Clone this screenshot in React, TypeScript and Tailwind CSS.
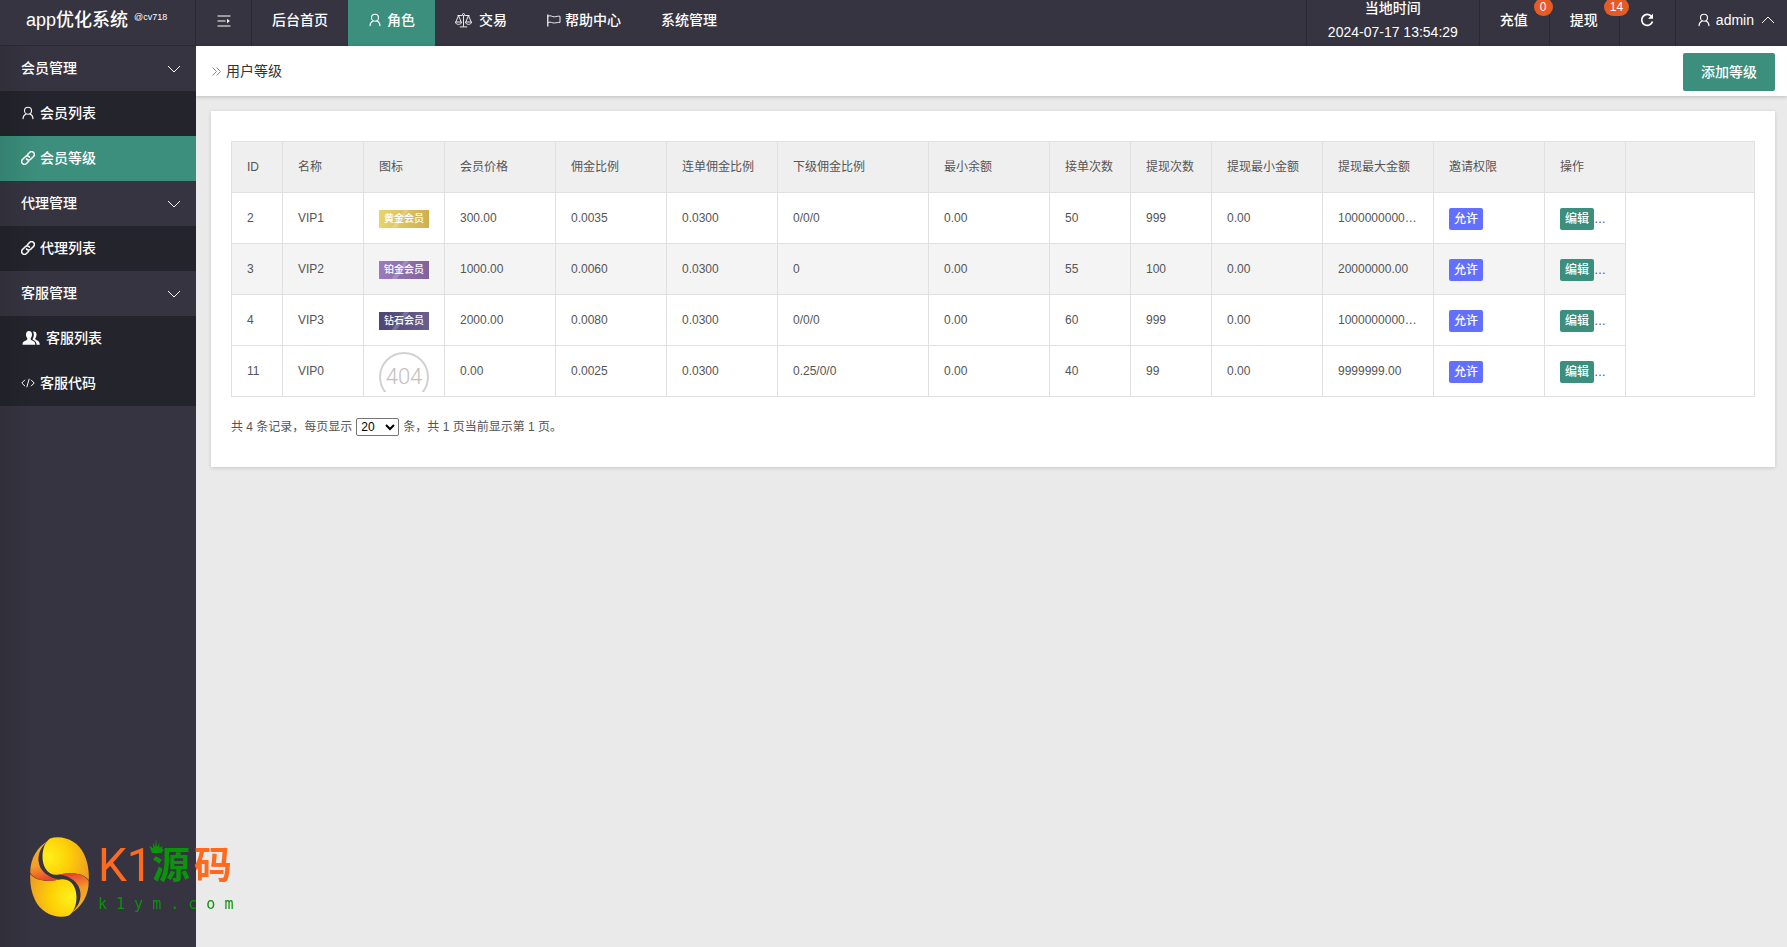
import type { ReactNode } from "react";

type IconProps = { className?: string };

const UserIcon = ({ className = "" }: IconProps) => (
  <svg viewBox="0 0 12 14" className={`h-3.5 w-3 ${className}`} fill="none" stroke="currentColor" strokeWidth="1.1" strokeLinecap="round" aria-hidden="true">
    <path d="M6 1.2c2 0 3.5 1.5 3.5 3.5S8 8.2 6 8.2 2.5 6.700 2.500 4.700 4 1.200 6 1.200Z" />
    <path d="M4.200 8C2.300 8.700 1.200 10.200 1 12.600M8 8c1.800.7 2.800 2.200 3 4.600" />
  </svg>
);

const MenuIcon = () => (
  <svg viewBox="0 0 14 14" className="h-3.5 w-3.5" fill="none" stroke="currentColor" strokeWidth="1.2" aria-hidden="true">
    <path d="M.5 2h13M.5 7h8M.5 12h13" />
    <path d="M10 4.800 12.800 7 10 9.200Z" fill="currentColor" stroke="none" />
  </svg>
);

const ScaleIcon = () => (
  <svg viewBox="0 0 17 15" className="h-[15px] w-[17px]" fill="none" stroke="currentColor" strokeWidth="0.9" aria-hidden="true">
    <circle cx="8.500" cy="1.500" r="1" />
    <path d="M2.500 2.500h5M9.500 2.500h5M8.500 2.500v11M4.800 13.900h7.400M3.500 2.500.8 9M3.500 2.500 6.200 9M13.500 2.500 10.800 9M13.500 2.500 16.200 9" />
    <path d="M.5 9h6c0 1.600-1.200 2.300-3 2.300S.5 10.600.5 9ZM10.500 9h6c0 1.600-1.200 2.300-3 2.300S10.500 10.600 10.500 9Z" />
  </svg>
);

const FlagIcon = () => (
  <svg viewBox="0 0 14 13" className="h-[13px] w-3.5" fill="none" stroke="currentColor" aria-hidden="true">
    <path d="M.8.5v12" strokeWidth="1.200" />
    <path d="M1 2.200c3-1.400 4 .9 6.500.6 2-.2 3.500-.9 5.500-.5v6.200c-2-.4-3.500.4-5.500.5C5 9.200 4 7.400 1 8.500" strokeWidth="0.9" />
  </svg>
);

const RefreshIcon = () => (
  <svg viewBox="0 0 14 14" className="h-3.5 w-3.5" fill="none" stroke="currentColor" aria-hidden="true">
    <path d="M11.600 3.600A5.500 5.500 0 1 0 12.500 8.500" strokeWidth="1.700" />
    <path d="M13 .8v5H8Z" fill="currentColor" stroke="none" />
  </svg>
);

const ChevronIcon = ({ className = "" }: IconProps) => (
  <svg viewBox="0 0 14 8" className={`h-2 w-3.5 ${className}`} fill="none" stroke="currentColor" strokeWidth="1" aria-hidden="true">
    <path d="m1 1 6 6 6-6" />
  </svg>
);

const LinkIcon = () => (
  <svg viewBox="0 0 14 14" className="h-3.5 w-3.5" fill="none" stroke="currentColor" strokeWidth="1.6" aria-hidden="true">
    <g transform="rotate(-45 7 7)">
      <path d="M5.500 9.800H2A2.800 2.800 0 0 1 2 4.200H6A2.800 2.800 0 0 1 8.600 8" />
      <path d="M8.500 4.200H12A2.800 2.800 0 0 1 12 9.800H8A2.800 2.800 0 0 1 5.400 6" />
    </g>
  </svg>
);

const GroupIcon = () => (
  <svg viewBox="0 0 18 14" className="h-3.5 w-[18px]" fill="currentColor" aria-hidden="true">
    <path d="M7 0c2 0 3 1.500 3 3.500 0 1.600-.6 3-1.300 3.700-.3 1.100.2 1.700 1.300 2.200 1.900.8 3.300 1.300 3.300 4.300H.5c0-3 1.500-3.500 3.500-4.300 1.100-.5 1.600-1.100 1.300-2.200C4.600 6.500 4 5.100 4 3.500 4 1.500 5 0 7 0Z" />
    <path d="M11 .5c2.200-.5 3.500.8 3.500 3 0 1.700-.5 2.800-1.100 3.500-.3 1 .1 1.700 1.200 2.200 1.700.7 3.200 1.500 3.200 4.500h-3.200c0-2.700-1.300-3.800-3.400-4.700-.5-.2-.7-.6-.5-1.200.7-1 1.100-2.400 1.100-4 0-1.300-.2-2.400-.8-3.300Z" />
  </svg>
);

const CodeIcon = () => (
  <svg viewBox="0 0 14 10" className="h-2.5 w-3.5" fill="none" stroke="currentColor" strokeWidth="1" aria-hidden="true">
    <path d="M4 1.800.8 5 4 8.200M10 1.800 13.200 5 10 8.200M8.200.8 5.800 9.200" />
  </svg>
);

const DoubleArrowIcon = () => (
  <svg viewBox="0 0 9 9" className="h-[9px] w-[9px]" fill="none" stroke="#888" strokeWidth="1" aria-hidden="true">
    <path d="m.6.5 3.800 4-3.800 4M4.600.5l3.800 4-3.800 4" />
  </svg>
);

const NAV: { label: string; icon?: ReactNode; active?: boolean }[] = [
  { label: "后台首页" },
  { label: "角色", icon: <UserIcon className="mr-1.5 ml-px" />, active: true },
  { label: "交易", icon: <span className="mr-[7px]"><ScaleIcon /></span> },
  { label: "帮助中心", icon: <span className="mr-1"><FlagIcon /></span> },
  { label: "系统管理" },
];

const MENU: { title: string; items: { label: string; icon: ReactNode; active?: boolean }[] }[] = [
  {
    title: "会员管理",
    items: [
      { label: "会员列表", icon: <UserIcon className="mx-px" /> },
      { label: "会员等级", icon: <LinkIcon />, active: true },
    ],
  },
  { title: "代理管理", items: [{ label: "代理列表", icon: <LinkIcon /> }] },
  {
    title: "客服管理",
    items: [
      { label: "客服列表", icon: <span className="mx-px"><GroupIcon /></span> },
      { label: "客服代码", icon: <CodeIcon /> },
    ],
  },
];

const COLUMNS = [
  { label: "ID", width: "w-[51px]" },
  { label: "名称", width: "w-[81px]" },
  { label: "图标", width: "w-[81px]" },
  { label: "会员价格", width: "w-[111px]" },
  { label: "佣金比例", width: "w-[111px]" },
  { label: "连单佣金比例", width: "w-[111px]" },
  { label: "下级佣金比例", width: "w-[151px]" },
  { label: "最小余额", width: "w-[121px]" },
  { label: "接单次数", width: "w-[81px]" },
  { label: "提现次数", width: "w-[81px]" },
  { label: "提现最小金额", width: "w-[111px]" },
  { label: "提现最大金额", width: "w-[111px]" },
  { label: "邀请权限", width: "w-[111px]" },
  { label: "操作", width: "w-[81px]" },
  { label: "", width: "" },
];

const LevelBadge = ({ label, tone }: { label: string; tone: string }) => (
  <div className={`relative mt-0.5 flex h-[18px] w-[50px] items-center justify-center overflow-hidden text-[10px] font-medium text-white ${tone}`}>
    <span className="absolute -top-2 left-5 h-8 w-1 rotate-35 bg-white/20" />
    <span className="relative">{label}</span>
  </div>
);

const MissingBadge = () => (
  <div className="mt-0.5 h-10 w-[50px] overflow-hidden">
    <div className="flex h-[50px] w-[50px] items-center justify-center rounded-full border-2 border-[#d6d1d1] font-['Roboto',sans-serif] text-[22px] font-light text-[#c4bebe]">
      404
    </div>
  </div>
);

const ROWS = [
  { id: "2", name: "VIP1", badge: <LevelBadge label="黄金会员" tone="bg-linear-to-r from-[#e9d56b] to-[#cfae52]" />, cells: ["300.00", "0.0035", "0.0300", "0/0/0", "0.00", "50", "999", "0.00", "1000000000…"] },
  { id: "3", name: "VIP2", badge: <LevelBadge label="铂金会员" tone="bg-linear-to-r from-[#9a7bbf] to-[#82629c]" />, cells: ["1000.00", "0.0060", "0.0300", "0", "0.00", "55", "100", "0.00", "20000000.00"] },
  { id: "4", name: "VIP3", badge: <LevelBadge label="钻石会员" tone="bg-linear-to-r from-[#4e4478] to-[#685f8b]" />, cells: ["2000.00", "0.0080", "0.0300", "0/0/0", "0.00", "60", "999", "0.00", "1000000000…"] },
  { id: "11", name: "VIP0", badge: <MissingBadge />, cells: ["0.00", "0.0025", "0.0300", "0.25/0/0", "0.00", "40", "99", "0.00", "9999999.00"] },
];

const CELL = "h-[51px] overflow-hidden border border-[#e0e0e0] px-[15px] py-0 text-left font-normal whitespace-nowrap";

function Header() {
  const cell = "flex h-full items-center border-l border-[#2a2933] pb-1.5";
  const count = "absolute -top-0.5 left-[54px] z-10 rounded-full bg-[#e65a26] px-1.5 text-xs leading-[18px]";
  return (
    <header className="flex h-[46px] bg-[#353440] text-sm font-medium text-white">
      <div className="flex w-[196px] shrink-0 border-r border-b border-[#2a2933] pt-2 pl-[26px] text-lg leading-6 font-medium">
        app优化系统
        <sup className="top-0 ml-1.5 text-[9px] leading-[18px]">@cv718</sup>
      </div>
      <button type="button" aria-label="折叠菜单" className="flex w-14 items-center justify-center border-r border-[#2a2933] pb-1">
        <MenuIcon />
      </button>
      <nav className="flex">
        {NAV.map((n) => (
          <a key={n.label} href="#" className={`flex items-center px-5 pb-1.5 ${n.active ? "bg-[#3b8f7c]" : ""}`}>
            {n.icon}
            {n.label}
          </a>
        ))}
      </nav>
      <div className="ml-auto flex">
        <div className={`${cell} w-[173px] justify-center text-center leading-6`}>
          <div>
            <div>当地时间</div>
            <div>2024-07-17 13:54:29</div>
          </div>
        </div>
        <a href="#" className={`${cell} relative w-[70px] pl-5`}>
          充值
          <span className={count}>0</span>
        </a>
        <a href="#" className={`${cell} relative w-[70px] pl-5`}>
          提现
          <span className={count}>14</span>
        </a>
        <button type="button" aria-label="刷新" className={`${cell} w-14 justify-center`}>
          <RefreshIcon />
        </button>
        <button type="button" className={`${cell} pr-3 pl-[22px]`}>
          <UserIcon className="mr-1.5" />
          admin
          <ChevronIcon className="ml-[7px] rotate-180" />
        </button>
      </div>
    </header>
  );
}

function Sidebar() {
  return (
    <aside className="relative w-[196px] shrink-0 bg-[#353440] text-sm font-medium text-white">
      {MENU.map((group) => (
        <section key={group.title}>
          <button type="button" className="flex h-[45px] w-full items-center justify-between pr-[15px] pb-0.5 pl-[21px]">
            {group.title}
            <ChevronIcon className="mt-0.5" />
          </button>
          <ul className="bg-[#24242c]">
            {group.items.map((item) => (
              <li key={item.label}>
                <a href="#" className={`flex h-[45px] items-center gap-[5px] pb-0.5 pl-[21px] ${item.active ? "bg-[#3b8f7c]" : ""}`}>
                  {item.icon}
                  {item.label}
                </a>
              </li>
            ))}
          </ul>
        </section>
      ))}
      <div className="pointer-events-none absolute inset-y-0 left-0 w-9 bg-linear-to-r from-black/10 to-transparent" />
    </aside>
  );
}

function LevelTable() {
  return (
    <table className="w-full table-fixed border-collapse text-xs text-[#555]">
      <thead>
        <tr className="bg-[#efefef]">
          {COLUMNS.map((c) => (
            <th key={c.label} scope="col" className={`${CELL} ${c.width}`}>
              {c.label}
            </th>
          ))}
        </tr>
      </thead>
      <tbody>
        {ROWS.map((r, i) => (
          <tr key={r.id} className={i === 1 ? "bg-[#f4f4f4]" : "bg-white"}>
            <td className={CELL}>{r.id}</td>
            <td className={CELL}>{r.name}</td>
            <td className={CELL}>{r.badge}</td>
            {r.cells.map((v, j) => (
              <td key={j} className={CELL}>
                {v}
              </td>
            ))}
            <td className={CELL}>
              <button type="button" className="mt-0.5 block rounded-xs bg-[#6370ff] px-[5px] leading-[22px] font-medium text-white">
                允许
              </button>
            </td>
            <td className={CELL}>
              <div className="mt-0.5 flex items-center">
                <button type="button" className="shrink-0 rounded-xs bg-[#3b8f7c] px-[5px] leading-[22px] font-medium text-white">
                  编辑
                </button>
                …
              </div>
            </td>
            {i === 0 && <td rowSpan={ROWS.length} className={`${CELL} bg-white`} />}
          </tr>
        ))}
      </tbody>
    </table>
  );
}

function SiteLogo() {
  return (
    <div className="pointer-events-none fixed bottom-[30px] left-[30px] flex items-center gap-2">
      <svg viewBox="0 0 60 80" className="h-20 w-[60px]" aria-hidden="true">
        <defs>
          <radialGradient id="lobe" gradientUnits="userSpaceOnUse" cx="18" cy="20" r="42">
            <stop offset="0" stopColor="#fff01c" />
            <stop offset="0.5" stopColor="#fdd006" />
            <stop offset="1" stopColor="#f0a020" />
          </radialGradient>
          <linearGradient id="flame" x1="0.3" y1="0" x2="0.5" y2="1">
            <stop offset="0" stopColor="#f7b824" />
            <stop offset="0.6" stopColor="#f39a2a" />
            <stop offset="1" stopColor="#e9412a" />
          </linearGradient>
          <path id="lobe-shape" d="M20 1.500C33-2.500 48 4 54 17c3.800 8 5.300 17 4.700 26C53 36 43 35 29 37.500 18 39.500 12.500 30 12.500 20c0-8 2.500-15 7.500-18.500Z" fill="url(#lobe)" />
          <path id="flame-shape" d="M18 4C8 9-.2 22 .3 36 6 44 16 45 30 42.500 18 41 9.500 34 8.500 24 8 15 12 9 18 4Z" fill="url(#flame)" />
        </defs>
        <use href="#lobe-shape" />
        <use href="#lobe-shape" transform="rotate(180 29.500 40)" />
        <use href="#flame-shape" />
        <use href="#flame-shape" transform="rotate(180 29.500 40)" />
      </svg>
      <div className="relative">
        <div className="flex items-center text-[38px] leading-[54px] text-[#ff6a1f]">
          <span className="w-[54px] font-['Roboto',sans-serif] text-[46px]">K1</span>
          <span className="mr-1 font-bold text-[#0c930c]">源</span>
          <span className="font-bold">码</span>
        </div>
        <div className="font-['DejaVu_Sans_Mono',monospace] text-[15px] leading-6 whitespace-nowrap text-[#0c930c]">k 1 y m . c o m</div>
        <svg viewBox="0 0 14 15" className="absolute top-0 left-[51px] h-[15px] w-3.5" fill="#0c930c" aria-hidden="true">
          <path d="M3 15 .2 7.500l4 3L4 4.500l2.200 5L7 .5l1 9 2.500-5-.4 6 3.700-3L11 15Z" />
        </svg>
      </div>
    </div>
  );
}

export default function App() {
  return (
    <div className="flex min-h-screen flex-col bg-[#eaeaea] font-['Liberation_Sans','Noto_Sans_CJK_SC',sans-serif]">
      <Header />
      <div className="flex flex-1">
        <Sidebar />
        <main className="min-w-0 flex-1">
          <div className="flex h-[50px] items-center justify-between bg-white pr-3 pl-4 shadow-[0_1px_4px_rgba(0,0,0,0.2)]">
            <h1 className="flex items-center gap-[5px] text-sm text-[#333]">
              <DoubleArrowIcon />
              用户等级
            </h1>
            <button type="button" className="mt-0.5 h-[38px] rounded-xs bg-[#3b8f7c] px-[18px] text-sm font-medium text-white">
              添加等级
            </button>
          </div>
          <section className="mt-[15px] mr-3 ml-[15px] bg-white px-5 pt-[30px] pb-[30px] shadow-[0_1px_4px_rgba(0,0,0,0.15)]">
            <LevelTable />
            <div className="mt-5 flex h-5 items-center gap-1 text-xs text-[#555]">
              <label htmlFor="page-size">共 4 条记录，每页显示</label>
              <select id="page-size" defaultValue="20" className="h-[18px] w-[43px] rounded-xs border border-[#767676] bg-white text-xs text-black">
                <option>20</option>
              </select>
              <span>条，共 1 页当前显示第 1 页。</span>
            </div>
          </section>
        </main>
      </div>
      <SiteLogo />
    </div>
  );
}
